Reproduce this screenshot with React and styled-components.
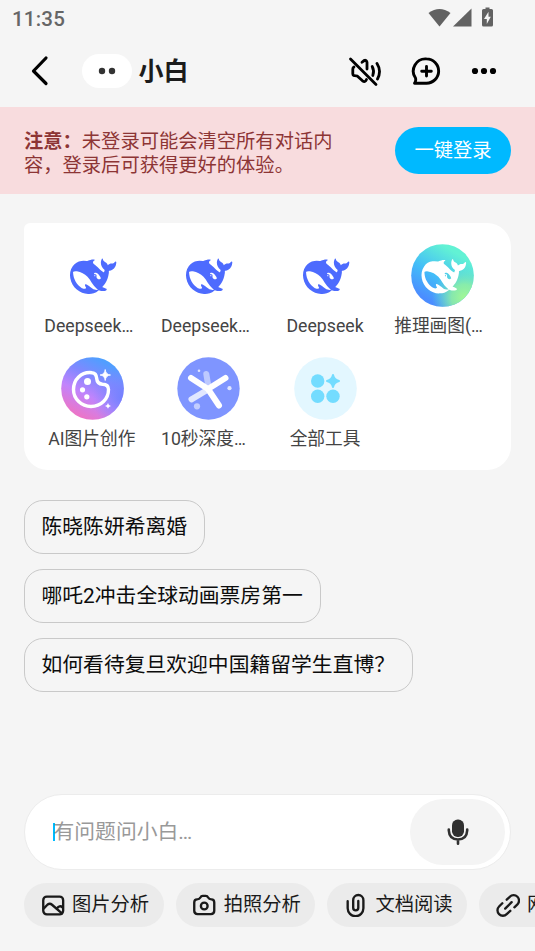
import React, { useState } from "react";
import styled, { createGlobalStyle } from "styled-components";

const GlobalStyle = createGlobalStyle`
  * {
    box-sizing: border-box;
  }
  body {
    margin: 0;
    background: #f5f5f5;
    font-family: Roboto, "Noto Sans CJK SC", sans-serif;
  }
  button {
    border: none;
    background: none;
    padding: 0;
    font-family: inherit;
  }
`;

const Screen = styled.div`
  width: 535px;
  height: 951px;
  display: flex;
  flex-direction: column;
  background: #f5f5f5;
  overflow: hidden;
`;

const StatusBar = styled.div`
  height: 36px;
  flex-shrink: 0;
  display: flex;
  align-items: center;
  justify-content: space-between;
  padding: 0 40px 0 12px;
  color: #666;
`;

const Clock = styled.span`
  margin-top: 2px;
  font-size: 20.5px;
  font-weight: 500;
  line-height: 24px;
  letter-spacing: 0.2px;
`;

const StatusIcons = styled.svg`
  width: 67px;
  height: 22px;
  display: block;
`;

const Header = styled.header`
  height: 71px;
  flex-shrink: 0;
  display: flex;
  align-items: center;
  padding: 0 38px 1px 30px;
`;

const IconButton = styled.button`
  width: ${({ $width }) => $width}px;
  height: 34px;
  display: flex;
  align-items: center;
  justify-content: center;
  margin-left: ${({ $gap }) => $gap || 0}px;
  color: #000;
`;

const Avatar = styled.svg`
  width: 52px;
  height: 36px;
  margin-left: 31px;
`;

const Title = styled.h1`
  margin: 2px auto 0 5.5px;
  font-size: 25px;
  line-height: 36px;
  font-weight: 700;
  color: #1b1b1b;
`;

const Notice = styled.section`
  height: 87px;
  flex-shrink: 0;
  display: flex;
  align-items: center;
  justify-content: space-between;
  padding: 0 24px;
  background: #f8dcde;
`;

const NoticeText = styled.p`
  width: 312px;
  margin: 7px 0 0;
  font-size: 19.3px;
  line-height: 24px;
  color: #8d3535;
`;

const LoginButton = styled.button`
  width: 116px;
  height: 47px;
  border-radius: 24px;
  background: #00b9ff;
  color: #fff;
  font-size: 19.3px;
  line-height: 47px;
`;

const ToolCard = styled.section`
  height: 247px;
  flex-shrink: 0;
  margin: 29px 24px 0;
  padding: 21px 10.5px 0 10px;
  display: grid;
  grid-template-columns: repeat(4, 1fr);
  grid-auto-rows: 113px;
  background: #fff;
  border-radius: 6px 24px 24px 24px;
`;

const Tool = styled.div`
  display: flex;
  flex-direction: column;
  align-items: center;
`;

const ToolIcon = styled.svg`
  width: 63px;
  height: 63px;
  flex-shrink: 0;
`;

const ToolName = styled.span`
  width: 95px;
  margin: 7px 1px 0 0;
  font-size: 17.7px;
  line-height: 24px;
  white-space: nowrap;
  color: #444;
  text-align: ${({ $cut }) => ($cut ? "left" : "center")};
`;

const Suggestions = styled.div`
  display: flex;
  flex-direction: column;
  align-items: flex-start;
  gap: 15px;
  padding: 30px 24px 0;
`;

const Suggestion = styled.button`
  height: 54px;
  padding: 0 17px 0 16.5px;
  border: 1px solid #c9c9c9;
  border-radius: 19px;
  font-size: 20.8px;
  line-height: 50px;
  white-space: nowrap;
  color: #0c0c0c;
`;

const Footer = styled.footer`
  margin-top: auto;
  padding-bottom: 24px;
`;

const InputBar = styled.div`
  height: 76px;
  margin: 0 24px;
  padding: 0 5px 0 28px;
  display: flex;
  align-items: center;
  justify-content: space-between;
  background: #fff;
  border: 1px solid #ececec;
  border-radius: 38px;
`;

const Placeholder = styled.span`
  display: flex;
  align-items: center;
  font-size: 20.8px;
  line-height: 30px;
  color: #999;
`;

const Caret = styled.i`
  width: 2px;
  height: 18px;
  margin-right: -1.5px;
  background: #00b9ff;
`;

const MicButton = styled.button`
  width: 95px;
  height: 66px;
  border-radius: 33px;
  background: #f4f4f4;
  display: flex;
  align-items: center;
  justify-content: center;
`;

const QuickBar = styled.div`
  display: flex;
  gap: 12px;
  margin-top: 13px;
  padding-left: 24px;
  overflow: hidden;
`;

const QuickButton = styled.button`
  width: 139.7px;
  height: 44px;
  flex-shrink: 0;
  display: flex;
  align-items: center;
  gap: 7px;
  padding-left: 16.5px;
  border-radius: 22px;
  background: #ebebeb;
  font-size: 19.3px;
  line-height: 44px;
  white-space: nowrap;
  color: #1a1a1a;

  svg {
    width: 24.5px;
    height: 24.5px;
    flex-shrink: 0;
  }
`;

const WHALE =
  "M23.748 4.482c-.254-.124-.364.113-.512.234-.051.039-.094.09-.137.136-.372.397-.806.657-1.373.626-.829-.046-1.537.214-2.163.848-.133-.782-.575-1.248-1.247-1.548-.352-.156-.708-.311-.955-.65-.172-.241-.219-.51-.305-.774-.055-.16-.11-.323-.293-.35-.2-.031-.278.136-.356.276-.313.572-.434 1.202-.422 1.84.027 1.436.633 2.58 1.838 3.393.137.093.172.187.129.323-.082.28-.18.552-.266.833-.055.179-.137.217-.329.14a5.526 5.526 0 01-1.736-1.18c-.857-.828-1.631-1.742-2.597-2.458a11.365 11.365 0 00-.689-.471c-.985-.957.13-1.743.388-1.836.27-.098.093-.432-.779-.428-.872.004-1.67.295-2.687.684a3.055 3.055 0 01-.465.137 9.597 9.597 0 00-2.883-.102c-1.885.21-3.39 1.102-4.497 2.623C.082 8.606-.231 10.684.152 12.85c.403 2.284 1.569 4.175 3.36 5.653 1.858 1.533 3.997 2.284 6.438 2.14 1.482-.085 3.133-.284 4.994-1.86.47.234.962.327 1.78.397.63.059 1.236-.03 1.705-.128.735-.156.684-.837.419-.961-2.155-1.004-1.682-.595-2.113-.926 1.096-1.296 2.746-2.642 3.392-7.003.05-.347.007-.565 0-.845-.004-.17.035-.237.23-.256a4.173 4.173 0 001.545-.475c1.396-.763 1.96-2.015 2.093-3.517.02-.23-.004-.467-.247-.588zM11.581 18c-2.089-1.642-3.102-2.183-3.52-2.16-.392.024-.321.471-.235.763.09.288.207.486.371.739.114.167.192.416-.113.603-.673.416-1.842-.14-1.897-.167-1.361-.802-2.5-1.86-3.301-3.307-.774-1.393-1.224-2.887-1.298-4.482-.02-.386.093-.522.477-.592a4.696 4.696 0 011.529-.039c2.132.312 3.946 1.265 5.468 2.774.868.86 1.525 1.887 2.202 2.891.72 1.066 1.494 2.082 2.48 2.914.348.292.625.514.891.677-.802.09-2.14.11-3.054-.614zm1-6.44a.306.306 0 01.415-.287.302.302 0 01.2.288.306.306 0 01-.31.307.303.303 0 01-.304-.308zm3.11 1.596c-.2.081-.399.151-.59.16a1.245 1.245 0 01-.798-.254c-.274-.23-.47-.358-.552-.758a1.73 1.73 0 01.016-.588c.07-.327-.008-.537-.239-.727-.187-.156-.426-.199-.688-.199a.559.559 0 01-.254-.078c-.11-.054-.2-.19-.114-.358.028-.054.16-.186.192-.21.356-.202.767-.136 1.146.016.352.144.618.408 1.001.782.391.451.462.576.685.914.176.265.336.537.445.848.067.195-.019.354-.25.452z";

function WhaleIcon() {
  return (
    <ToolIcon viewBox="0 0 63 63">
      <path
        d={WHALE}
        fill="#4d6bfe"
        transform="translate(9 8.6) scale(1.93 2)"
      />
    </ToolIcon>
  );
}

function DrawWhaleIcon() {
  return (
    <ToolIcon viewBox="0 0 63 63">
      <defs>
        <linearGradient id="sea" x1="0.2" y1="0.85" x2="0.65" y2="0.1">
          <stop offset="0" stopColor="#4b8dff" />
          <stop offset="0.45" stopColor="#43bdf8" />
          <stop offset="1" stopColor="#62f2d4" />
        </linearGradient>
        <radialGradient id="lime" cx="0.85" cy="0.85" r="0.52">
          <stop offset="0" stopColor="#a2f895" />
          <stop offset="0.4" stopColor="#92f2a0" stopOpacity="0.85" />
          <stop offset="1" stopColor="#62e8cc" stopOpacity="0" />
        </radialGradient>
      </defs>
      <circle cx="31.5" cy="31.5" r="31.3" fill="url(#sea)" />
      <circle cx="31.5" cy="31.5" r="31.3" fill="url(#lime)" />
      <path
        d={WHALE}
        fill="#fff"
        transform="translate(10.5 9.3) scale(1.86 1.94)"
      />
    </ToolIcon>
  );
}

function PaletteIcon() {
  return (
    <ToolIcon viewBox="0 0 63 63">
      <defs>
        <linearGradient id="paint" x1="0.75" y1="0" x2="0.25" y2="1">
          <stop offset="0" stopColor="#42a5ff" />
          <stop offset="0.35" stopColor="#8088ff" />
          <stop offset="0.62" stopColor="#c184fc" />
          <stop offset="1" stopColor="#f472bd" />
        </linearGradient>
        <radialGradient id="violet" cx="1" cy="0.65" r="0.5">
          <stop offset="0" stopColor="#7280ff" />
          <stop offset="1" stopColor="#8088ff" stopOpacity="0" />
        </radialGradient>
      </defs>
      <circle cx="31.5" cy="31.5" r="31.3" fill="url(#paint)" />
      <circle cx="31.5" cy="31.5" r="31.3" fill="url(#violet)" />
      <path
        d="M31 15.7C20 14.5 12.5 22.5 12.5 32.5C12.5 42 20.5 49.5 30 49.5C40 49.5 47.5 42 47.5 32.5C47.5 28.5 45 27.2 41.5 27.2C38 27 36 25 35.7 21.5C35.5 18.5 34.5 16 31 15.7Z"
        fill="none"
        stroke="#fff"
        strokeWidth="3.4"
      />
      <circle cx="26.5" cy="24.5" r="3.5" fill="#fff" />
      <circle cx="21.5" cy="32.8" r="2.6" fill="#fff" />
      <circle cx="25.8" cy="39.8" r="2.6" fill="#fff" />
      <path
        d="M44.2 12.5Q44.8 17.6 49.5 18Q44.8 18.4 44.2 23.5Q43.6 18.4 39 18Q43.6 17.6 44.2 12.5Z"
        fill="#fff"
        stroke="#fff"
        strokeWidth="0.8"
      />
      <path
        d="M47 46Q47.4 48.5 50 48.9Q47.4 49.3 47 51.8Q46.6 49.3 44 48.9Q46.6 48.5 47 46Z"
        fill="#fff"
      />
    </ToolIcon>
  );
}

function DeepIcon() {
  return (
    <ToolIcon viewBox="0 0 63 63">
      <circle cx="31.5" cy="31.5" r="31.2" fill="#7f95ff" />
      <g strokeLinecap="round" strokeWidth="6" fill="none">
        <path d="M29.3 17L31.5 30" stroke="#bdc9ff" />
        <path d="M14.5 42.3L31 32.5" stroke="#e1e7ff" />
        <path d="M14 21L31 32L48.5 21M31 32L42 48.5" stroke="#fff" />
      </g>
      <circle cx="22" cy="13.8" r="1.3" fill="#dfe5ff" />
      <circle cx="52.5" cy="31.2" r="2.1" fill="#dfe5ff" />
      <circle cx="20" cy="49.3" r="3.1" fill="#c2cdff" />
    </ToolIcon>
  );
}

function AllIcon() {
  return (
    <ToolIcon viewBox="0 0 63 63">
      <circle cx="31.5" cy="31.5" r="31.3" fill="#e3f7ff" />
      <g fill="#73dcff">
        <circle cx="23.7" cy="24" r="6.7" />
        <circle cx="23.7" cy="39.3" r="6.7" />
        <circle cx="39" cy="39.3" r="6.7" />
        <path
          d="M39 18Q40.2 22.8 45 24Q40.2 25.2 39 30Q37.8 25.2 33 24Q37.8 22.8 39 18Z"
          stroke="#73dcff"
          strokeWidth="2"
          strokeLinejoin="round"
        />
      </g>
    </ToolIcon>
  );
}

function StrokeIcon({ children }) {
  return (
    <svg
      viewBox="0 0 24 24"
      fill="none"
      stroke="currentColor"
      strokeWidth="2.3"
      strokeLinecap="round"
      strokeLinejoin="round"
    >
      {children}
    </svg>
  );
}

const BackIcon = () => (
  <svg width="20" height="32" viewBox="0 0 20 32" fill="none">
    <path
      d="M16 3L3.5 16L16 28.5"
      stroke="#000"
      strokeWidth="3.2"
      strokeLinecap="round"
      strokeLinejoin="round"
    />
  </svg>
);

const MutedIcon = () => (
  <svg width="34" height="32" viewBox="0 0 34 32" fill="none">
    <g stroke="#000" strokeWidth="2.8" strokeLinecap="round" strokeLinejoin="round">
      <path d="M2.5 4L28 29.5" />
      <path d="M6 12Q4.8 12.7 4.8 14V19Q4.8 20.3 6 20.5L9.5 21.2L14.5 25.8Q17.2 27.8 18.5 24.5" />
      <path d="M14 7.2Q18.4 3.2 19 7.5V14" />
      <path d="M24.2 11.5Q26.6 16 24.8 20.5" />
      <path d="M29 8.5Q33.8 16 29.5 24" />
    </g>
  </svg>
);

const NewChatIcon = () => (
  <svg width="30" height="32" viewBox="0 0 30 32" fill="none">
    <path
      d="M15.5 3.9A12.1 12.1 0 0 1 15.5 28.2H3.5Q4.6 27 4.7 25.2Q4.8 24.3 4.5 23A12.2 12.2 0 0 1 15.5 3.9Z"
      stroke="#000"
      strokeWidth="2.9"
      strokeLinejoin="round"
    />
    <path
      d="M15.5 11.5V21M10.7 16.2H20.3"
      stroke="#000"
      strokeWidth="2.9"
      strokeLinecap="round"
    />
  </svg>
);

const MoreIcon = () => (
  <svg width="26" height="8" viewBox="0 0 26 8">
    <circle cx="4" cy="4" r="3.1" />
    <circle cx="13" cy="4" r="3.1" />
    <circle cx="22" cy="4" r="3.1" />
  </svg>
);

const MicIcon = () => (
  <svg width="24" height="28" viewBox="0 0 24 28" fill="none">
    <rect x="6" y="1.5" width="12" height="17.5" rx="5.7" fill="#303030" />
    <path
      d="M2.8 11.5V12.5Q3.3 21.5 12 21.5Q20.7 21.5 21.2 12.5V11.5M12 22V25.8"
      stroke="#303030"
      strokeWidth="2.6"
      strokeLinecap="round"
    />
  </svg>
);

const PictureIcon = () => (
  <StrokeIcon>
    <rect x="2.2" y="3.5" width="19.5" height="17.5" rx="3.5" />
    <path d="M2.8 15L6.5 11.3Q8.7 9.7 10.8 11.5L20.5 20" />
    <path d="M15.5 15.2Q18.3 11.5 21 14" />
  </StrokeIcon>
);

const CameraIcon = () => (
  <StrokeIcon>
    <path d="M5 6.3Q7.3 6.3 8.2 4.5Q8.9 2.8 10.5 2.8H13.5Q15.1 2.8 15.8 4.5Q16.7 6.3 19 6.3Q21.8 6.3 21.8 9.3V17.5Q21.8 20.7 18.5 20.7H5.5Q2.2 20.7 2.2 17.5V9.3Q2.2 6.3 5 6.3Z" />
    <circle cx="12" cy="12.8" r="3.3" />
  </StrokeIcon>
);

const ClipIcon = () => (
  <StrokeIcon>
    <path d="M3.6 8V15A7.7 7.7 0 0 0 19 15V7A5 5 0 0 0 9 7V14.5A2.5 2.5 0 0 0 14 14.5V7.8" />
  </StrokeIcon>
);

const LinkIcon = () => (
  <StrokeIcon>
    <path d="M10.5 6.5L13.5 3.7A5.3 5.3 0 0 1 21 11.2L18 14" />
    <path d="M14 17.5L10.5 20.7A5.3 5.3 0 0 1 3 13.2L6.2 10" />
    <path d="M9 15.3L15.3 9" />
  </StrokeIcon>
);

const tools = [
  { name: "Deepseek…", cut: true, Icon: WhaleIcon },
  { name: "Deepseek…", cut: true, Icon: WhaleIcon },
  { name: "Deepseek", Icon: WhaleIcon },
  { name: "推理画图(…", cut: true, Icon: DrawWhaleIcon },
  { name: "AI图片创作", Icon: PaletteIcon },
  { name: "10秒深度…", cut: true, Icon: DeepIcon },
  { name: "全部工具", Icon: AllIcon },
];

const suggestions = [
  "陈晓陈妍希离婚",
  "哪吒2冲击全球动画票房第一",
  "如何看待复旦欢迎中国籍留学生直博？",
];

const quickActions = [
  { name: "图片分析", Icon: PictureIcon },
  { name: "拍照分析", Icon: CameraIcon },
  { name: "文档阅读", Icon: ClipIcon },
  { name: "网页阅读", Icon: LinkIcon },
];

const App = () => {
  const [question, setQuestion] = useState("");

  return (
    <Screen>
      <GlobalStyle />
      <StatusBar>
        <Clock>11:35</Clock>
        <StatusIcons viewBox="0 0 67 22" fill="#626262">
          <path d="M0.5 6Q11.5 -2 22.5 6L11.5 19.5Z" />
          <path d="M43.5 1.5V19.5H25Z" />
          {/* battery with the charging bolt cut out */}
          <path
            fillRule="evenodd"
            d="M55.5 2H57.5V0.5H61.5V2H63.5Q65 2 65 3.5V18Q65 19.5 63.5 19.5H55.5Q54 19.5 54 18V3.5Q54 2 55.5 2ZM60.5 4.8L56 12H58.8V17L62.8 9.7H60.5Z"
          />
        </StatusIcons>
      </StatusBar>

      <Header>
        <IconButton $width={20}>
          <BackIcon />
        </IconButton>
        <Avatar viewBox="0 0 52 36">
          <rect x="1" y="1" width="50" height="34" rx="17" fill="#fff" />
          <circle cx="21" cy="18" r="3.2" fill="#333" />
          <circle cx="31" cy="18" r="3.2" fill="#333" />
        </Avatar>
        <Title>小白</Title>
        <IconButton $width={34}>
          <MutedIcon />
        </IconButton>
        <IconButton $width={30} $gap={29}>
          <NewChatIcon />
        </IconButton>
        <IconButton $width={26} $gap={30}>
          <MoreIcon />
        </IconButton>
      </Header>

      <Notice>
        <NoticeText>
          <b>注意：</b>未登录可能会清空所有对话内容，登录后可获得更好的体验。
        </NoticeText>
        <LoginButton>一键登录</LoginButton>
      </Notice>

      <ToolCard>
        {tools.map(({ name, cut, Icon }, index) => (
          <Tool key={index}>
            <Icon />
            <ToolName $cut={cut}>{name}</ToolName>
          </Tool>
        ))}
      </ToolCard>

      <Suggestions>
        {suggestions.map((text) => (
          <Suggestion key={text} onClick={() => setQuestion(text)}>
            {text}
          </Suggestion>
        ))}
      </Suggestions>

      <Footer>
        <InputBar>
          <Placeholder>
            <Caret />
            {question || "有问题问小白…"}
          </Placeholder>
          <MicButton>
            <MicIcon />
          </MicButton>
        </InputBar>
        <QuickBar>
          {quickActions.map(({ name, Icon }) => (
            <QuickButton key={name}>
              <Icon />
              {name}
            </QuickButton>
          ))}
        </QuickBar>
      </Footer>
    </Screen>
  );
};

export default App;
